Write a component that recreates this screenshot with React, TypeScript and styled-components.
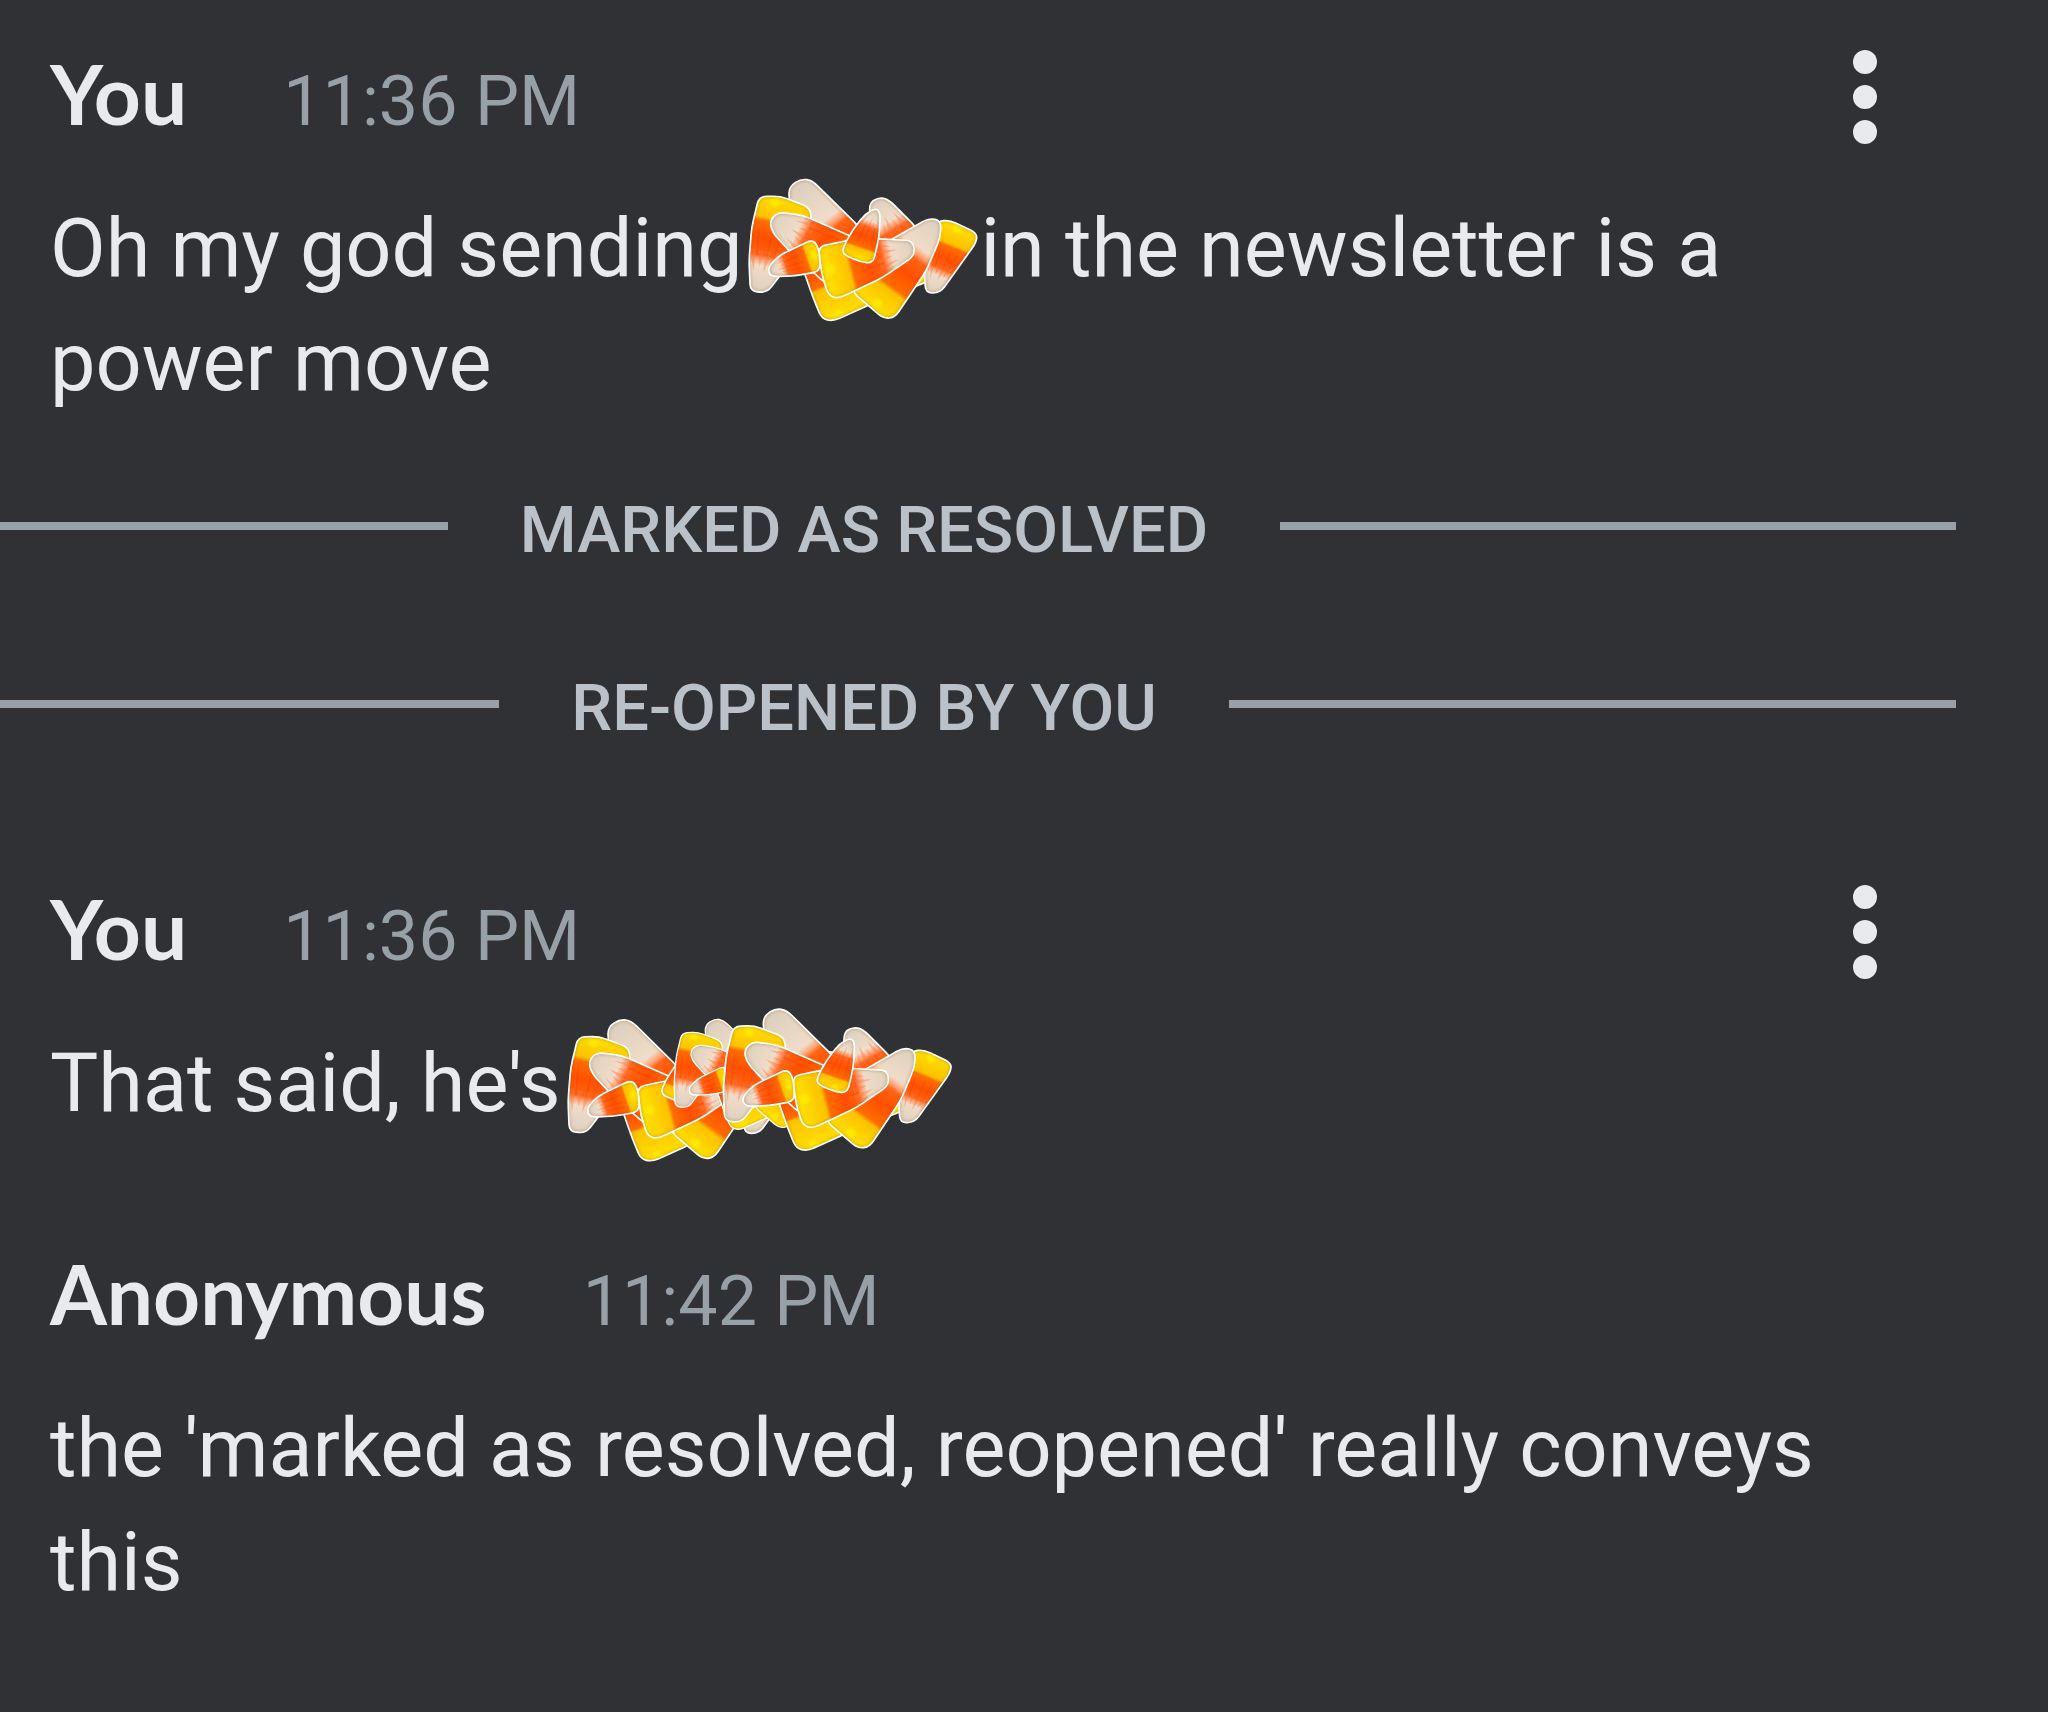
import React, { useId } from "react";
import styled, { createGlobalStyle } from "styled-components";

const GlobalStyle = createGlobalStyle`
  *, *::before, *::after { box-sizing: border-box; }
  html { background: #303135; }
  body {
    margin: 0;
    background: #303135;
    color: #e8eaed;
    font-family: Roboto, "Liberation Sans", sans-serif;
    overflow-x: hidden;
  }
`;

const Thread = styled.main`
  min-height: 100vh;
  padding-top: 47px;
  padding-bottom: 48px;
  overflow: hidden;
`;

const Comment = styled.article`
  display: flex;
  flex-direction: column;
  gap: 45px;
  padding: 0 143px 0 50px;

  & + & {
    margin-top: 106px;
  }
`;

const CommentHeader = styled.header`
  display: flex;
  align-items: flex-start;
  justify-content: space-between;
  height: 100px;
`;

const Byline = styled.div`
  display: flex;
  align-items: baseline;
  gap: 96px;
  line-height: 92px;
`;

const Author = styled.h2`
  margin: 0;
  font-family: Lato, Roboto, sans-serif;
  font-size: 82px;
  font-weight: 700;
`;

const Time = styled.time`
  color: #979fa7;
  font-size: 70px;
`;

const MenuButton = styled.button`
  display: flex;
  align-items: center;
  justify-content: center;
  width: 80px;
  height: 100px;
  padding: 0;
  border: 0;
  background: none;
  color: inherit;
  cursor: pointer;
`;

const Body = styled.p`
  margin: 0;
  font-size: 81px;
  line-height: 114px;
`;

const Events = styled.section`
  display: flex;
  flex-direction: column;
  gap: 102px;
  margin: 68px 92px 140px -228px;
`;

const Divider = styled.div`
  display: flex;
  align-items: center;
  gap: 72px;
  height: 76px;

  &::before,
  &::after {
    content: "";
    flex: 1;
    height: 8px;
    background: #979fa7;
  }
`;

const DividerLabel = styled.span`
  padding-top: 8px;
  color: #bbc1c8;
  font-size: 65px;
  font-weight: 500;
  line-height: 76px;
  text-transform: uppercase;
`;

const Sticker = styled.svg`
  display: inline-block;
  margin: -40px 2px -40px 6px;
  vertical-align: middle;
`;

type Point = [number, number];

interface CandyShape {
  outline: Point[];
  tip: Point;
  base: Point;
  stops: [number, number];
  smooth?: boolean;
}

const candies: CandyShape[] = [
  { outline: [[178, 78], [215, 54], [248, 60], [390, 200], [340, 320], [220, 290], [178, 120]], tip: [205, 65], base: [420, 340], stops: [0.46, 0.86], smooth: true },
  { outline: [[420, 124], [452, 110], [478, 118], [560, 200], [600, 360], [500, 400], [420, 200]], tip: [440, 110], base: [585, 365], stops: [0.34, 0.8] },
  { outline: [[622, 182], [660, 178], [742, 218], [740, 245], [632, 396], [588, 398], [584, 330]], tip: [600, 400], base: [690, 185], stops: [0.32, 0.68] },
  { outline: [[88, 108], [150, 106], [240, 140], [246, 180], [170, 320], [112, 396], [62, 392], [58, 300], [66, 200]], tip: [80, 402], base: [140, 100], stops: [0.35, 0.74] },
  { outline: [[215, 310], [400, 300], [430, 428], [310, 482], [276, 474], [250, 410]], tip: [260, 270], base: [335, 480], stops: [0.05, 0.5] },
  { outline: [[120, 180], [145, 154], [220, 164], [380, 234], [372, 400], [290, 370], [180, 272], [128, 215]], tip: [120, 165], base: [385, 300], stops: [0.38, 0.86] },
  { outline: [[470, 245], [598, 172], [634, 180], [632, 230], [590, 330], [496, 470], [462, 474], [366, 392]], tip: [625, 175], base: [425, 450], stops: [0.36, 0.74], smooth: true },
  { outline: [[266, 258], [350, 240], [440, 234], [550, 240], [556, 284], [460, 350], [325, 414], [296, 404], [276, 340]], tip: [565, 258], base: [280, 332], stops: [0.34, 0.72] },
  { outline: [[114, 322], [146, 286], [250, 236], [268, 264], [272, 332], [195, 346], [122, 348]], tip: [112, 334], base: [270, 280], stops: [0.32, 0.76] },
  { outline: [[406, 160], [440, 142], [452, 158], [448, 230], [430, 308], [392, 304], [338, 280], [342, 256], [368, 210]], tip: [444, 140], base: [386, 310], stops: [0.32, 0.73] },
];

function roundedPath(points: Point[], radius: number) {
  const n = points.length;
  const towards = (a: Point, b: Point): Point => {
    const len = Math.hypot(b[0] - a[0], b[1] - a[1]);
    const k = Math.min(radius, len / 2) / len;
    return [a[0] + (b[0] - a[0]) * k, a[1] + (b[1] - a[1]) * k];
  };
  return (
    points
      .map((p, i) => {
        const start = towards(p, points[(i + n - 1) % n]);
        const end = towards(p, points[(i + 1) % n]);
        return `${i === 0 ? "M" : "L"}${start.join(" ")}Q${p.join(" ")} ${end.join(" ")}`;
      })
      .join("") + "Z"
  );
}

/* Grooves that run from the orange band into the pale tip. */
function grooves({ tip, base, stops }: CandyShape) {
  const dx = base[0] - tip[0];
  const dy = base[1] - tip[1];
  const at = (t: number, s: number) => `${tip[0] + dx * t - dy * s} ${tip[1] + dy * t + dx * s}`;
  return [-0.2, -0.12, -0.04, 0.04, 0.12, 0.2]
    .map((s, i) => {
      const reach = stops[0] - (i % 2 ? 0.13 : 0.07);
      return `M${at(reach, s * 0.6)}L${at(stops[0] + 0.08, s - 0.03)}L${at(stops[0] + 0.08, s + 0.03)}Z`;
    })
    .join("");
}

function Candy({ shape, id }: { shape: CandyShape; id: string }) {
  const { outline, tip, base, stops, smooth } = shape;
  const d = roundedPath(outline, 22);
  const dx = base[0] - tip[0];
  const dy = base[1] - tip[1];
  const ridge = (s: number) =>
    `M${tip[0] + dx * (stops[0] + 0.03) - dy * s * 0.7} ${tip[1] + dy * (stops[0] + 0.03) + dx * s * 0.7}` +
    `L${tip[0] + dx * (stops[1] - 0.08) - dy * s} ${tip[1] + dy * (stops[1] - 0.08) + dx * s}`;
  return (
    <g>
      <defs>
        <linearGradient id={`${id}g`} gradientUnits="userSpaceOnUse" x1={tip[0]} y1={tip[1]} x2={base[0]} y2={base[1]}>
          <stop offset="0" stopColor="#dccfbe" />
          <stop offset={Math.max(0, stops[0] - 0.06)} stopColor="#f0dcc8" />
          <stop offset={stops[0]} stopColor="#ffa070" />
          <stop offset={stops[0] + 0.04} stopColor="#ff6414" />
          <stop offset={(stops[0] + stops[1]) / 2} stopColor="#ff5000" />
          <stop offset={stops[1] - 0.02} stopColor="#ff6c00" />
          <stop offset={stops[1] + 0.02} stopColor="#fcc200" />
          <stop offset="1" stopColor="#ffe200" />
        </linearGradient>
        <clipPath id={`${id}c`}>
          <path d={d} />
        </clipPath>
        <filter id={`${id}b`} x="-20%" y="-20%" width="140%" height="140%">
          <feGaussianBlur stdDeviation="4" />
        </filter>
      </defs>
      <path d={d} fill={`url(#${id}g)`} />
      <g clipPath={`url(#${id}c)`}>
        {!smooth && (
          <>
            <path d={grooves(shape)} fill="#ff7440" opacity="0.4" />
            <path d={ridge(-0.1) + ridge(0.04) + ridge(0.14)} stroke="#d93600" strokeWidth="4" opacity="0.22" />
          </>
        )}
        <circle cx={base[0] - dx * 0.08} cy={base[1] - dy * 0.08} r="15" fill="#fff200" opacity="0.65" filter={`url(#${id}b)`} />
        <path d={d} fill="none" stroke="#8a5a20" strokeWidth="10" opacity="0.3" filter={`url(#${id}b)`} />
      </g>
      <path d={d} fill="none" stroke="#ffffff" strokeWidth="5" />
    </g>
  );
}

function CandyCluster({ x = 0, y = 0, scale = 1 }: { x?: number; y?: number; scale?: number }) {
  const id = useId().replace(/[^a-zA-Z0-9]/g, "");
  return (
    <g transform={`translate(${x} ${y}) scale(${scale})`}>
      {candies.map((shape, i) => (
        <Candy key={i} shape={shape} id={`${id}n${i}`} />
      ))}
    </g>
  );
}

function SmallCandyPile() {
  return (
    <Sticker width="230" height="153" viewBox="55 52 690 459" role="img" aria-label="candy corn">
      <CandyCluster />
    </Sticker>
  );
}

function LargeCandyPile() {
  return (
    <Sticker width="385" height="166" viewBox="49 46 1155 498" role="img" aria-label="candy corn">
      <CandyCluster x={-6} y={28} />
      <CandyCluster x={325} y={39} scale={0.78} />
      <CandyCluster x={460} y={-4} />
    </Sticker>
  );
}

function MoreMenu() {
  return (
    <MenuButton type="button" aria-label="More options">
      <svg width="24" height="94" viewBox="0 0 24 94" fill="currentColor" aria-hidden="true">
        <circle cx="12" cy="12" r="12" />
        <circle cx="12" cy="47" r="12" />
        <circle cx="12" cy="82" r="12" />
      </svg>
    </MenuButton>
  );
}

interface CommentItemProps {
  author: string;
  time: string;
  menu?: boolean;
  children: React.ReactNode;
}

function CommentItem({ author, time, menu, children }: CommentItemProps) {
  return (
    <Comment>
      <CommentHeader>
        <Byline>
          <Author>{author}</Author>
          <Time>{time}</Time>
        </Byline>
        {menu && <MoreMenu />}
      </CommentHeader>
      <Body>{children}</Body>
    </Comment>
  );
}

export default function App() {
  return (
    <>
      <GlobalStyle />
      <Thread>
        <CommentItem author="You" time="11:36 PM" menu>
          Oh my god sending
          <SmallCandyPile />
          in the newsletter is a power move
        </CommentItem>
        <Events>
          <Divider>
            <DividerLabel>Marked as resolved</DividerLabel>
          </Divider>
          <Divider>
            <DividerLabel>Re-opened by you</DividerLabel>
          </Divider>
        </Events>
        <CommentItem author="You" time="11:36 PM" menu>
          That said, he's
          <LargeCandyPile />
        </CommentItem>
        <CommentItem author="Anonymous" time="11:42 PM">
          the 'marked as resolved, reopened' really conveys this
        </CommentItem>
      </Thread>
    </>
  );
}
